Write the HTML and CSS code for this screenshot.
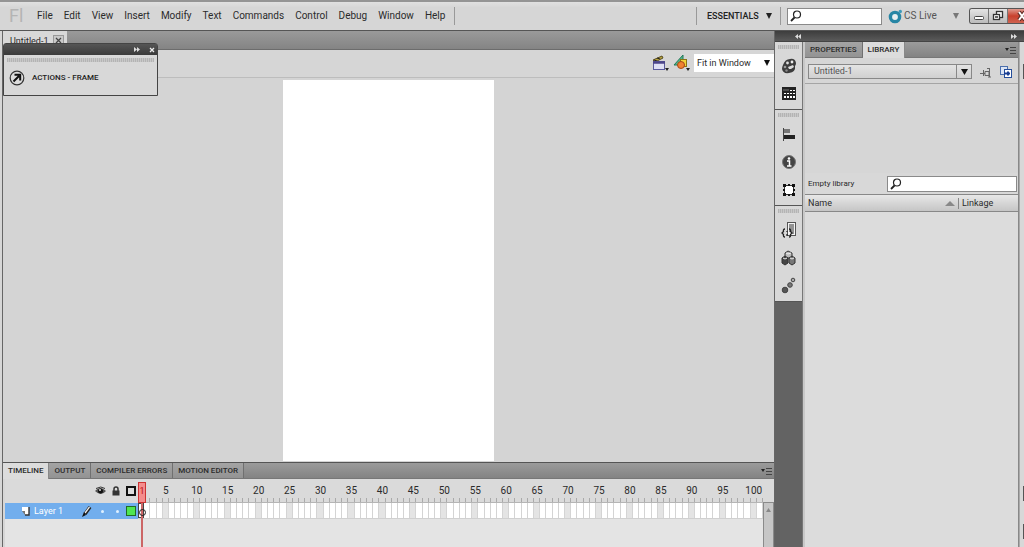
FILE: index.html
```html
<!DOCTYPE html>
<html lang="en">
<head>
<meta charset="utf-8">
<title>Untitled-1</title>
<link rel="stylesheet" href="styles.css">
</head>
<body>
<header class="menubar">
  <span class="logo">Fl</span>
  <nav class="menus">
    <button>File</button><button>Edit</button><button>View</button><button>Insert</button><button>Modify</button><button>Text</button><button>Commands</button><button>Control</button><button>Debug</button><button>Window</button><button>Help</button>
  </nav>
  <span class="rule"></span>
  <span class="spacer"></span>
  <span class="rule"></span>
  <button class="workspace">ESSENTIALS <svg width="6" height="6" viewBox="0 0 6 6"><path d="M0 0h6L3 6z" fill="#222"/></svg></button>
  <span class="rule"></span>
  <label class="search top-search">
    <svg width="12" height="12" viewBox="0 0 12 12" fill="none" stroke="#222"><circle cx="7" cy="4.5" r="3.5" stroke-width="1.2"/><path d="M4.5 7.5L1 11" stroke-width="1.8"/></svg>
    <input type="text" aria-label="Search help">
  </label>
  <button class="cslive">
    <svg width="15" height="15" viewBox="0 0 15 15"><circle cx="7" cy="8" r="4.6" fill="#e9eff1" stroke="#2786a5" stroke-width="3.4"/><circle cx="12.3" cy="2.5" r="1.7" fill="#3d9aba"/></svg>
    CS Live
    <svg class="drop" width="6" height="6" viewBox="0 0 6 6"><path d="M0 0h6L3 6z" fill="#777"/></svg>
  </button>
  <div class="winbtns">
    <button aria-label="Minimize"><svg width="18" height="14" viewBox="0 0 18 14"><rect x="4.5" y="7.5" width="9" height="3" rx="1" fill="#fff" stroke="#444"/></svg></button>
    <button aria-label="Restore"><svg width="18" height="14" viewBox="0 0 18 14" fill="#fff" stroke="#333" stroke-width="1.3"><rect x="7.500" y="2.500" width="6" height="6"/><rect x="4.500" y="5.500" width="6" height="5"/><path d="M6 8h3"/></svg></button>
    <button class="close" aria-label="Close"><svg width="18" height="14" viewBox="0 0 18 14"><path d="M11 3l6 8M17 3l-6 8" stroke="#5d2b26" stroke-width="4"/><path d="M11 3l6 8M17 3l-6 8" stroke="#fff" stroke-width="2"/></svg></button>
  </div>
</header>

<div class="workspace-area">
  <main class="document">
    <div class="doc-tabs">
      <div class="doc-tab">Untitled-1 <button aria-label="Close document"><svg width="9" height="9" viewBox="0 0 9 9"><path d="M2 2l5 5M7 2L2 7" stroke="#444" stroke-width="1.2"/></svg></button></div>
    </div>
    <div class="doc-toolbar">
      <button aria-label="Edit scene"><svg width="17" height="17" viewBox="0 0 17 17"><path d="M1 6l9-4 1 2-8 4z" fill="#b9a33c" stroke="#594e22"/><path d="M2 6l3 1M5 4l3 1" stroke="#222"/><rect x="1.500" y="7.500" width="11" height="8" fill="#dfe0f4" stroke="#5b5b9c"/><path d="M1 8.500h12" stroke="#4c468a" stroke-width="2.500"/><path d="M13 14h4l-2 3z" fill="#222"/></svg></button>
      <button aria-label="Edit symbols"><svg width="17" height="17" viewBox="0 0 17 17"><path d="M1 11L10 1v10z" fill="#53b78b" stroke="#25785a"/><rect x="7.500" y="5.500" width="6" height="7" fill="#f2d338" stroke="#8b7412"/><circle cx="8" cy="11" r="3.500" fill="#f08131" stroke="#a84717"/><path d="M13 14h4l-2 3z" fill="#222"/></svg></button>
      <div class="zoom"><select aria-label="Zoom"><option>Fit in Window</option></select><svg width="6" height="6" viewBox="0 0 6 6"><path d="M0 0h6L3 6z" fill="#111"/></svg></div>
    </div>
    <div class="pasteboard"><div class="stage"></div></div>

    <section class="timeline">
      <div class="tabs">
        <button class="tab active">TIMELINE</button><button class="tab">OUTPUT</button><button class="tab">COMPILER ERRORS</button><button class="tab">MOTION EDITOR</button>
        <button class="panel-menu" aria-label="Timeline menu"><svg width="11" height="8" viewBox="0 0 11 8"><path d="M0 2h4L2 5z" fill="#222"/><path d="M5 1.500h6M5 4.500h6M5 7.500h6" stroke="#444"/></svg></button>
      </div>
      <div class="tl-body">
        <div class="layers">
          <div class="layer-head">
            <svg width="11" height="10" viewBox="0 0 11 10"><path d="M0 5q5-6 11 0-5 6-11 0z" fill="#555"/><circle cx="5.500" cy="5" r="2.500" fill="#111"/><circle cx="5" cy="4" r="1" fill="#ddd"/><path d="M1 2.500q5-3 9 0" fill="none" stroke="#333"/></svg>
            <svg width="8" height="10" viewBox="0 0 8 10"><path d="M2 5V3a2 2 0 014 0v2" fill="none" stroke="#333" stroke-width="1.500"/><rect x="0.500" y="4.500" width="7" height="5" fill="#333"/></svg>
            <svg width="10" height="10" viewBox="0 0 10 10"><rect x="1" y="1" width="8" height="8" fill="#ddd" stroke="#111" stroke-width="2"/></svg>
          </div>
          <div class="layer-row">
            <svg width="9" height="10" viewBox="0 0 9 10"><path d="M1 1h7v8H4V5H1z" fill="#fff"/><path d="M8 1v8H4" fill="none" stroke="#333" stroke-width="1.400"/><path d="M1 5h3v4z" fill="#777"/></svg>
            <span class="layer-name">Layer 1</span>
            <svg width="10" height="11" viewBox="0 0 10 11"><path d="M8 1L3 8" stroke="#222" stroke-width="3.400"/><path d="M7.500 1L3 7" stroke="#eee" stroke-width="1.300"/><path d="M2 6L0 11l4-2z" fill="#111"/></svg>
            <span class="dot"></span><span class="dot"></span><span class="outline"></span>
          </div>
        </div>
        <div class="frames">
          <div class="ruler" id="ruler"></div>
          <div class="frame-row" id="frames"></div>
          <div class="playhead"><b>1</b><i></i></div>
        </div>
        <div class="tl-scroll"><div><svg width="5" height="4" viewBox="0 0 5 4"><path d="M0 4h5L2.500 0z" fill="#888"/></svg></div></div>
      </div>
    </section>
  </main>

  <div class="docks">
    <div class="dock-bar">
      <button aria-label="Expand icons"><svg width="6" height="5" viewBox="0 0 6 5"><path d="M3 0v5L0 2.500zM6 0v5L3 2.500z" fill="#ddd"/></svg></button>
      <button aria-label="Collapse panels"><svg width="6" height="5" viewBox="0 0 6 5"><path d="M0 0v5l3-2.500zM3 0v5l3-2.500z" fill="#ddd"/></svg></button>
    </div>
    <div class="dock-row">
      <aside class="strip">
        <div class="group">
          <div class="grip"></div>
          <button aria-label="Color"><svg width="16" height="16" viewBox="0 0 16 16"><path d="M2 7Q4 1 9 1q5-1 6 4 0 2-1 3 1 6-6 7Q2 16 1 11q0-2 1-4z" fill="#3c3c3c"/><circle cx="6.500" cy="5" r="1.400" fill="#ddd"/><circle cx="11" cy="4" r="1.400" fill="#eee"/><circle cx="4" cy="9" r="1.300" fill="#999"/><circle cx="5.500" cy="12.500" r="1.200" fill="#888"/><path d="M7 9l5-2 1 2-3 2-2 0z" fill="#ddd"/></svg></button>
          <button aria-label="Swatches"><svg width="14" height="14" viewBox="0 0 14 14"><path d="M0 0h14v13H0z" fill="#222"/><path d="M2 6h2v1H2zM2 9h2v2H2zM5 6h2v1H5zM5 9h2v2H5zM8 3h2v1H8zM8 6h2v1H8zM8 9h2v2H8zM11 3h2v1h-2zM11 6h2v1h-2zM11 9h2v2h-2z" fill="#fff"/><path d="M1 3h6" stroke="#777"/></svg></button>
        </div>
        <div class="group">
          <div class="grip"></div>
          <button aria-label="Align"><svg width="14" height="14" viewBox="0 0 14 14"><path d="M1.500 1v13" stroke="#444"/><rect x="2" y="2" width="6" height="4" fill="#777"/><rect x="2" y="8" width="11" height="4" fill="#222"/></svg></button>
          <button aria-label="Info"><svg width="16" height="16" viewBox="0 0 16 16"><circle cx="8" cy="8" r="6.500" fill="#444" stroke="#777"/><circle cx="8" cy="4.500" r="1.300" fill="#fff"/><path d="M6 7h2.500v5M6 12h4.500" fill="none" stroke="#fff" stroke-width="1.500"/></svg></button>
          <button aria-label="Transform"><svg width="14" height="14" viewBox="0 0 14 14"><rect x="2.500" y="2.500" width="9" height="9" fill="#fff" stroke="#333"/><path d="M1 1h3v3H1zM10 1h3v3h-3zM1 10h3v3H1zM10 10h3v3h-3zM6 1h2v2H6zM6 11h2v2H6zM1 6h2v2H1zM11 6h2v2h-2z" fill="#111"/></svg></button>
        </div>
        <div class="group">
          <div class="grip"></div>
          <button aria-label="Code snippets"><svg width="16" height="16" viewBox="0 0 16 16"><rect x="6.500" y="0.500" width="8" height="13" fill="#f4f4f4" stroke="#555"/><path d="M8 3h5M8 5h5M8 7h5M8 9h5M11 11h2" stroke="#333"/><path d="M4 7q-2 0-1.500 2.500L1 11l1.500 1.500Q2 15 4 15M8 7q2 0 1.500 2.500L11 11l-1.500 1.500Q10 15 8 15M6 9v1M6 12v2" fill="none" stroke="#222" stroke-width="1.300"/></svg></button>
          <button aria-label="Components"><svg width="16" height="16" viewBox="0 0 16 16" stroke="#333"><path d="M4 3l3-2 4 2v5H4z" fill="#bbb"/><path d="M1 8l3-2 3 2v5l-3 2-3-2z" fill="#444"/><path d="M8 8l3-2 3 2v5l-3 2-3-2z" fill="#777"/><path d="M2 8l2 1 2-1M9 8l2 1 2-1M5 3l2 1 3-1" stroke="#eee" fill="none"/></svg></button>
          <button aria-label="Motion presets"><svg width="16" height="18" viewBox="0 0 16 18" stroke="#444"><circle cx="4" cy="13" r="2.800" fill="#555"/><circle cx="9" cy="8" r="2.300" fill="#777"/><circle cx="12" cy="3" r="1.800" fill="#aaa"/></svg></button>
        </div>
      </aside>
      <section class="library">
        <div class="tabs">
          <button class="tab">PROPERTIES</button><button class="tab active">LIBRARY</button>
          <button class="panel-menu" aria-label="Library menu"><svg width="11" height="8" viewBox="0 0 11 8"><path d="M0 2h4L2 5z" fill="#222"/><path d="M5 1.500h6M5 4.500h6M5 7.500h6" stroke="#444"/></svg></button>
        </div>
        <div class="doc-pick">
          <div class="combo"><select aria-label="Library document"><option>Untitled-1</option></select><svg width="7" height="6" viewBox="0 0 7 6"><path d="M0 0h7L3.500 6z" fill="#111"/></svg></div>
          <button aria-label="Pin library"><svg width="12" height="12" viewBox="0 0 12 12" fill="none" stroke="#666"><path d="M0 7.500h5M3.500 4v6M5 5.500h4v4H5zM9.500 2v9M7 2.500h3M8 11h3"/></svg></button>
          <button aria-label="New library panel"><svg width="12" height="12" viewBox="0 0 12 12"><rect x="0.500" y="0.500" width="7" height="8" fill="#dce5f5" stroke="#4c70ad"/><rect x="4.500" y="3.500" width="7" height="8" fill="#fff" stroke="#244d9b"/><path d="M4 7.500h6M8 5.500v4" stroke="#1b3f93" stroke-width="2"/></svg></button>
        </div>
        <div class="preview"></div>
        <div class="find">
          <span>Empty library</span>
          <label class="search"><svg width="12" height="12" viewBox="0 0 12 12" fill="none" stroke="#222"><circle cx="7" cy="4.500" r="3.500" stroke-width="1.200"/><path d="M4.500 7.500L1 11" stroke-width="1.800"/></svg><input type="text" aria-label="Search library"></label>
        </div>
        <table class="items">
          <thead><tr><th class="name"><div><span>Name</span><svg width="10" height="5" viewBox="0 0 10 5"><path d="M0 5h10L5 0z" fill="#888"/></svg></div></th><th class="linkage"><span>Linkage</span></th></tr></thead>
        </table>
      </section>
      <div class="edge"><span class="e1"></span><span class="e2"></span><span class="e3"></span></div>
    </div>
  </div>
</div>

<section class="actions">
  <div class="actions-bar">
    <button aria-label="Expand"><svg width="6" height="5" viewBox="0 0 6 5"><path d="M0 0v5l3-2.500zM3 0v5l3-2.500z" fill="#ddd"/></svg></button>
    <button aria-label="Close panel"><svg width="6" height="6" viewBox="0 0 6 6"><path d="M1 1l4 4M5 1L1 5" stroke="#eee" stroke-width="1.300"/></svg></button>
  </div>
  <div class="grip"></div>
  <button class="actions-item"><svg width="16" height="16" viewBox="0 0 16 16"><circle cx="8" cy="8" r="6.800" fill="#ddd" stroke="#333" stroke-width="1.200"/><path d="M4.500 11.500L10 6M5.500 4.800h5.700v5.700" fill="none" stroke="#111" stroke-width="2"/></svg>ACTIONS - FRAME</button>
</section>
<script src="timeline.js"></script>
</body>
</html>
```

FILE: styles.css
```css
* { box-sizing: border-box; }
body {
  margin: 0;
  height: 100vh;
  display: flex;
  flex-direction: column;
  overflow: hidden;
  background: #d6d6d6;
  color: #2b2b2b;
  font: 9px/14px Roboto, "Noto Sans", sans-serif;
}
button, input, select {
  font: inherit;
  color: inherit;
  border: 0;
  padding: 0;
  margin: 0;
  background: none;
  border-radius: 0;
}
select { appearance: none; outline: 0; }
button { display: flex; align-items: center; white-space: nowrap; }
svg { display: block; flex: none; }

.menubar {
  display: flex;
  align-items: center;
  height: 31px;
  flex: none;
  padding-left: 9px;
  border-top: 2px solid #949494;
  border-bottom: 1px solid #555;
  background: linear-gradient(#e0e0e0, #d6d6d6 20%);
  font-size: 10px;
}
.logo { width: 28px; color: #b4b4b4; font-size: 18px; }
.menus { display: flex; gap: 11px; margin-right: 9px; }
.rule { width: 1px; height: 18px; background: #999; }
.spacer { flex: 1; }
.workspace { width: 83px; justify-content: space-between; padding: 0 8px 0 10px; color: #222; font-size: 9px; font-weight: 500; }
.search {
  display: flex;
  align-items: center;
  height: 16px;
  padding-left: 2px;
  border: 1px solid #8a8a8a;
  background: #fff;
}
.search input { flex: 1; min-width: 0; outline: 0; }
.top-search { width: 95px; margin: 0 6px; height: 17px; }
.cslive { width: 81px; gap: 1px; color: #555; }
.drop { margin: 0 10px 0 auto; }
.winbtns {
  display: flex;
  width: 55px;
  overflow: hidden;
  border: 1px solid #555;
  border-right: 0;
  border-radius: 3px 0 0 3px;
}
.winbtns button { width: 19px; flex: none; background: linear-gradient(#e4e4e4, #bbb); border-right: 1px solid #777; }
.winbtns .close { background: linear-gradient(#df9a8e, #c8402d 50%, #cf6350); }

.workspace-area { flex: 1; display: flex; min-height: 0; }
.document {
  flex: 1;
  min-width: 0;
  display: flex;
  flex-direction: column;
  margin-left: 2px;
  border-left: 1px solid #666;
  border-right: 1px solid #666;
}
.doc-tabs {
  display: flex;
  height: 19px;
  flex: none;
  background: linear-gradient(#9a9a9a, #848484);
  border-bottom: 1px solid #6c6c6c;
}
.doc-tab { display: flex; align-items: center; gap: 5px; padding: 1px 3px 0 7px; background: #d8d8d8; }
.doc-tab button { border: 1px solid #999; background: #c9c9c9; }
.doc-toolbar {
  display: flex;
  align-items: center;
  justify-content: flex-end;
  gap: 4px;
  height: 28px;
  flex: none;
  padding-bottom: 2px;
  border-bottom: 1px solid #bdbdbd;
}
.zoom { display: flex; align-items: center; width: 80px; height: 18px; padding: 0 4px 0 3px; background: #fff; }
.zoom select, .combo select { flex: 1; min-width: 0; }
.pasteboard { flex: 1; display: flex; justify-content: center; padding: 2px 0 1px; background: #d4d4d4; border-bottom: 1px solid #555; }
.stage { width: 211px; background: #fff; }

.tabs {
  display: flex;
  height: 16px;
  flex: none;
  background: linear-gradient(#9b9b9b, #838383);
  border-bottom: 1px solid #777;
  font-size: 8px;
  font-weight: 500;
}
.tab { padding: 0 5px; background: linear-gradient(#a4a4a4, #939393); border-right: 1px solid #707070; }
.tab.active { background: #dcdcdc; height: 16px; border-right-color: #888; }
.panel-menu { margin-left: auto; padding-right: 2px; }

.timeline { flex: none; height: 84px; display: flex; flex-direction: column; background: #e4e4e4; }
.tl-body { flex: 1; display: flex; min-height: 0; }
.layers { width: 135px; flex: none; border-left: 2px solid #d6d6d6; }
.layer-head {
  height: 24px;
  display: flex;
  align-items: center;
  justify-content: flex-end;
  gap: 6px;
  padding-right: 2px;
  background: #dadada;
}
.layer-row {
  height: 16px;
  display: flex;
  align-items: center;
  padding: 0 2px 0 16px;
  gap: 4px;
  background: #72aeed;
  color: #fff;
}
.layer-name { flex: 1; }
.dot { width: 3px; height: 3px; margin: 0 3px 0 5px; border-radius: 50%; background: #dff0ff; }
.layer-row .outline { width: 10px; height: 10px; border: 1px solid #226b22; background: #4fe650; }
.frames { flex: 1; position: relative; min-width: 0; }
.ruler, .frame-row { display: grid; grid-template-columns: repeat(101, minmax(0, 1fr)); grid-template-rows: 100%; }
.ruler { height: 24px; background: #dadada; border-bottom: 1px solid #b5b5b5; font-size: 10px; }
.tick { grid-row: 1; align-self: end; height: 4px; border-right: 1px solid #aaa; }
.num { grid-row: 1; justify-self: center; width: 20px; margin: 5px -7px 0; text-align: center; }
.frame-row { height: 16px; border-bottom: 1px solid #d0d0d0; }
.cell { background: #fff; border-right: 1px solid #d4d4d4; }
.cell.fifth { background: #e4e4e4; }
.playhead { position: absolute; left: 0; top: 3px; bottom: 0; width: 8px; display: flex; flex-direction: column; align-items: center; }
.playhead b { width: 8px; height: 21px; padding-top: 2px; border: 1px solid #c33; background: #f48c8c; color: #b11; text-align: center; font-weight: 400; line-height: 13px; }
.playhead i { flex: 1; width: 2px; background: #c66; }
.key { position: relative; border: 1px solid #444; }
.key::after { content: ""; position: absolute; z-index: 1; left: 0; bottom: 1px; width: 5px; height: 5px; border: 1px solid #222; border-radius: 50%; }
.tl-scroll { width: 11px; flex: none; padding-top: 23px; background: #dadada; }
.tl-scroll div { height: 100%; display: flex; justify-content: center; padding-top: 5px; border: 1px solid #8a8a8a; border-bottom: 0; background: #c6c6c6; }

.docks { width: 249px; flex: none; display: flex; flex-direction: column; }
.dock-bar { display: flex; justify-content: space-between; padding: 0 7px 0 20px; height: 11px; flex: none; background: linear-gradient(#3d3d3d, #5a5a5a); border-bottom: 1px solid #444; }
.dock-row { flex: 1; display: flex; min-height: 0; }
.strip { width: 28px; flex: none; background: #636363; border-right: 1px solid #777; }
.group { display: flex; flex-direction: column; padding-bottom: 1px; border-bottom: 1px solid #555; background: #d8d8d8; }
.grip { height: 4px; margin: 3px; background: repeating-linear-gradient(90deg, #b4b4b4 0 1px, #c8c8c8 1px 2px); }
.group button { height: 28px; justify-content: center; }

.library { flex: 1; display: flex; flex-direction: column; min-width: 0; border-left: 2px solid #c8c8c8; border-right: 1px solid #888; background: #dcdcdc; }
.doc-pick { display: flex; align-items: center; gap: 8px; height: 26px; flex: none; padding: 2px 6px 0 3px; background: #d6d6d6; border-bottom: 1px solid #a5a5a5; }
.combo { flex: 1; display: flex; align-items: center; gap: 4px; height: 15px; padding: 0 3px 0 5px; border: 1px solid #888; background: linear-gradient(#e4e4e4, #d0d0d0); color: #555; }
.combo select { border-right: 1px solid #888; height: 13px; line-height: 13px; }
.preview { height: 89px; flex: none; background: #d6d6d6; }
.find { display: flex; align-items: center; height: 21px; flex: none; padding: 0 1px 0 3px; background: #d8d8d8; font-size: 8px; }
.find span { width: 79px; flex: none; white-space: nowrap; }
.find .search { flex: 1; min-width: 0; }
.items { width: 100%; border-collapse: collapse; border: 1px solid #888; border-width: 1px 0; background: linear-gradient(#e8e8e8, #c4c4c4); }
.items th { padding: 0 3px; height: 17px; font-weight: 400; text-align: left; }
.name div { display: flex; align-items: center; justify-content: space-between; }
.items .linkage { width: 60px; padding: 0; }
.linkage span { display: block; border-left: 1px solid #888; padding-left: 3px; line-height: 11px; }
.edge { width: 5px; display: flex; flex-direction: column; justify-content: space-between; align-items: flex-end; padding: 22px 0 8px; background: #d8d8d8; border-left: 1px solid #aaa; }
.edge span { width: 1px; height: 15px; background: #555; }
.edge .e2 { margin: auto 0 23px; }

.actions { position: absolute; left: 3px; top: 43px; width: 155px; height: 53px; border: 1px solid #444; border-radius: 3px 3px 0 0; background: #d8d8d8; }
.actions-bar { display: flex; justify-content: flex-end; gap: 9px; padding-right: 2px; height: 11px; background: linear-gradient(#555, #3a3a3a); }
.actions-item { gap: 7px; padding-left: 5px; margin-top: 8px; color: #222; font-size: 8px; font-weight: 500; }
```

FILE: timeline.js
```js
const ruler = document.getElementById("ruler");
const frames = document.getElementById("frames");

for (let n = 1; n <= 101; n++) {
  const tick = document.createElement("span");
  tick.className = "tick";
  tick.style.gridColumn = n;
  ruler.append(tick);

  if (n % 5 === 0) {
    const num = document.createElement("span");
    num.className = "num";
    num.style.gridColumn = n;
    num.textContent = n;
    ruler.append(num);
  }

  const cell = document.createElement("span");
  cell.className = n === 1 ? "cell key" : n % 5 === 0 ? "cell fifth" : "cell";
  frames.append(cell);
}
```
